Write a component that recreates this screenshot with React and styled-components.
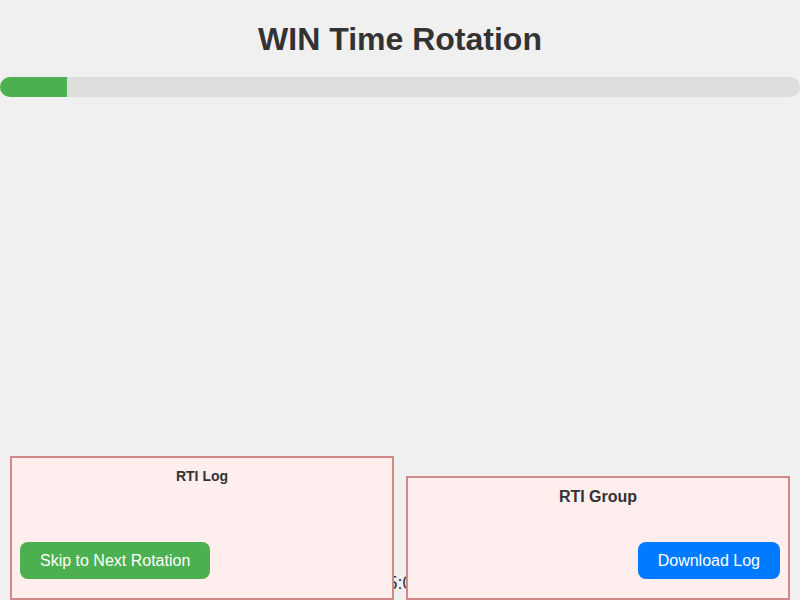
import React from 'react';
import styled, { createGlobalStyle } from 'styled-components';

const GlobalStyle = createGlobalStyle`
  html, body {
    margin: 0;
    padding: 0;
    background: #f0f0f0;
    font-family: "Liberation Sans", Arial, sans-serif;
    color: #333;
  }
`;

const Page = styled.div`
  height: 100vh;
  display: flex;
  flex-direction: column;
  overflow: hidden;
`;

const Title = styled.h1`
  margin: 21px 0 19px;
  font-size: 32px;
  line-height: 37px;
  font-weight: 700;
  text-align: center;
  color: #333;
`;

const ProgressTrack = styled.div`
  height: 20px;
  background: #ddd;
  border-radius: 10px;
  overflow: hidden;
`;

const ProgressFill = styled.div`
  height: 100%;
  background: #4caf50;
`;

const Stage = styled.div`
  flex: 1;
  display: grid;
  grid-template-areas: 'stage';
  align-items: end;
`;

const Timer = styled.div`
  grid-area: stage;
  margin-bottom: 6px;
  font-size: 18px;
  text-align: center;
  color: #333;
`;

const PanelRow = styled.div`
  grid-area: stage;
  z-index: 1;
  display: grid;
  grid-template-columns: 1fr 1fr;
  gap: 12px;
  padding: 0 10px;
  align-items: end;
`;

const Panel = styled.section`
  height: ${({ $height }) => $height}px;
  box-sizing: border-box;
  display: flex;
  flex-direction: column;
  justify-content: space-between;
  align-items: ${({ $align }) => $align};
  padding: 10px 8px 19px;
  background: #ffeeee;
  border: 2px solid #d08888;
`;

const PanelTitle = styled.h3`
  margin: 0;
  align-self: stretch;
  text-align: center;
  font-size: ${({ $size }) => $size}px;
  font-weight: 700;
  color: #333;
`;

const Button = styled.button`
  border: none;
  border-radius: 8px;
  padding: 9px 20px;
  font-family: inherit;
  font-size: 16px;
  line-height: 19px;
  color: #fff;
  background: ${({ $color }) => $color};
  cursor: pointer;
`;

export default function App() {
  const progress = 100 / 12;

  return (
    <>
      <GlobalStyle />
      <Page>
        <Title>WIN Time Rotation</Title>
        <ProgressTrack>
          <ProgressFill style={{ width: `${progress}%` }} />
        </ProgressTrack>
        <Stage>
          <Timer>15:00</Timer>
          <PanelRow>
            <Panel $height={144} $align="flex-start">
              <PanelTitle $size={14}>RTI Log</PanelTitle>
              <Button $color="#4caf50">Skip to Next Rotation</Button>
            </Panel>
            <Panel $height={124} $align="flex-end">
              <PanelTitle $size={16}>RTI Group</PanelTitle>
              <Button $color="#007bff">Download Log</Button>
            </Panel>
          </PanelRow>
        </Stage>
      </Page>
    </>
  );
}
